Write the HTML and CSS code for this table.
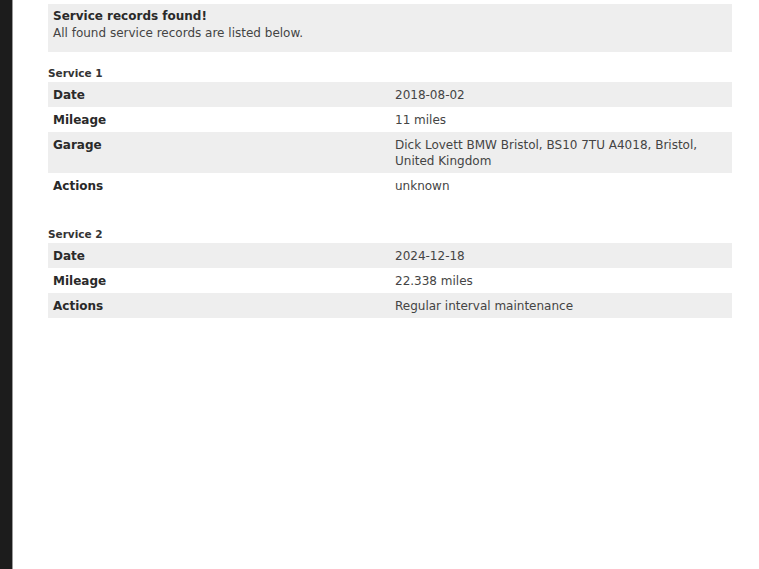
FILE: index.html
```html
<!DOCTYPE html>
<html>
<head>
<meta charset="utf-8">
<link rel="stylesheet" href="styles.css">
</head>
<body>
<div class="frame">
  <div class="sidebar"></div>
  <main class="main">
    <div class="alert">
      <div class="alert-title">Service records found!</div>
      <div class="alert-text">All found service records are listed below.</div>
    </div>

    <section class="service">
      <h3 class="service-title">Service 1</h3>
      <table class="records">
        <tr><th>Date</th><td>2018-08-02</td></tr>
        <tr><th>Mileage</th><td>11 miles</td></tr>
        <tr><th>Garage</th><td>Dick Lovett BMW Bristol, BS10 7TU A4018, Bristol, United Kingdom</td></tr>
        <tr><th>Actions</th><td>unknown</td></tr>
      </table>
    </section>

    <section class="service">
      <h3 class="service-title">Service 2</h3>
      <table class="records">
        <tr><th>Date</th><td>2024-12-18</td></tr>
        <tr><th>Mileage</th><td>22.338 miles</td></tr>
        <tr><th>Actions</th><td>Regular interval maintenance</td></tr>
      </table>
    </section>
  </main>
</div>
</body>
</html>
```
FILE: styles.css
```css
html, body {
  margin: 0;
  padding: 0;
  background: #fff;
}
body {
  font-family: "DejaVu Sans", Verdana, sans-serif;
  font-size: 12px;
  color: #333;
}
.frame {
  display: flex;
  min-height: 569px;
}
.sidebar {
  width: 12px;
  flex: none;
  background: #1c1c1c;
  border-right: 1px solid #9a9a9a;
}
.main {
  flex: 1;
  padding: 4px 27px 0 35px;
}
.alert {
  background: #eeeeee;
  padding: 4px 5px 10px;
  line-height: 17px;
}
.alert-title {
  font-weight: bold;
  color: #2a2a2a;
}
.alert-text {
  color: #444;
}
.service {
  margin-top: 14px;
}
.service-title {
  margin: 0 0 2px;
  font-size: 10.5px;
  line-height: 14px;
  font-weight: bold;
  color: #333;
}
.records {
  width: 100%;
  border-collapse: collapse;
  table-layout: fixed;
}
.records th,
.records td {
  width: 50%;
  padding: 5px 5px 4px;
  line-height: 16px;
  text-align: left;
  vertical-align: top;
  font-size: 12px;
}
.records th {
  font-weight: bold;
  color: #2a2a2a;
}
.records td {
  color: #444;
}
.records tr:nth-child(odd) {
  background: #eeeeee;
}
.service + .service {
  margin-top: 29px;
}
```
